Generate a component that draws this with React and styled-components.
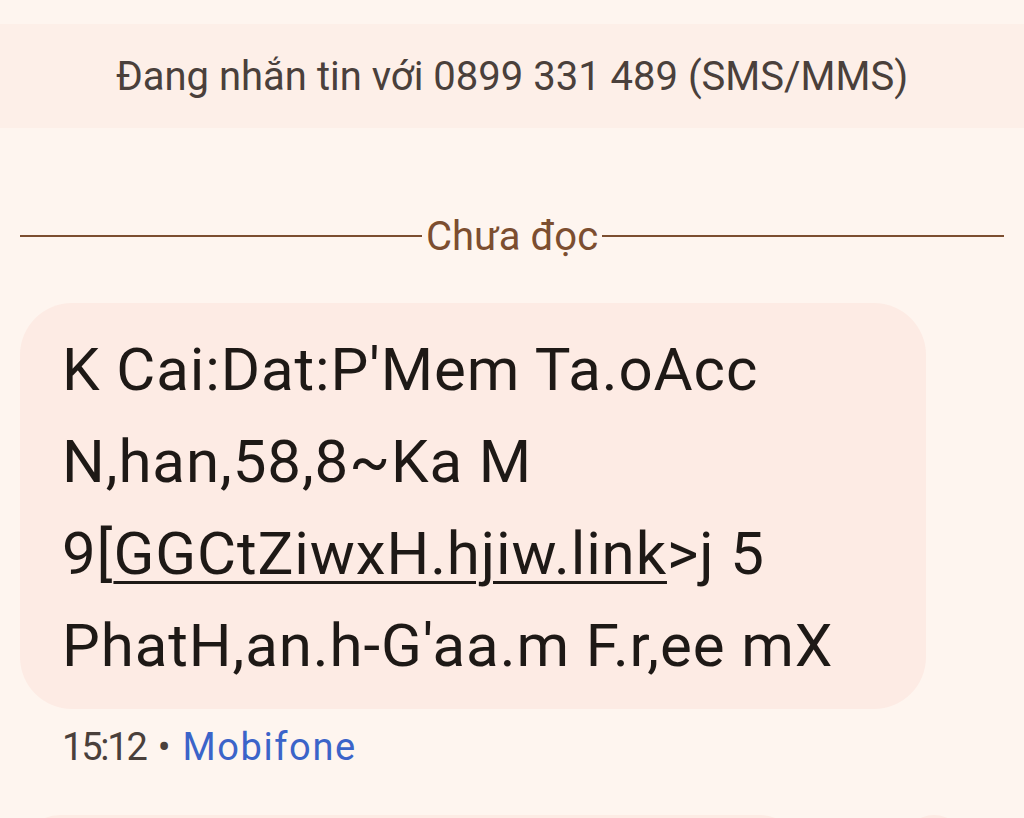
import styled, { createGlobalStyle } from "styled-components";

const Global = createGlobalStyle`
    html, body {
        margin: 0;
        padding: 0;
        background: #fef5ef;
        font-family: Roboto, "Noto Sans", sans-serif;
    }
    body {
        width: 1024px;
        height: 818px;
        overflow: hidden;
    }
`;

const Screen = styled.div`
    display: flex;
    flex-direction: column;
    padding-top: 24px;
`;

const Banner = styled.header`
    height: 104px;
    display: flex;
    align-items: center;
    justify-content: center;
    background-color: #fdefe8;
    color: #4a403b;
    font-size: 40px;
`;

const Divider = styled.div`
    display: flex;
    align-items: center;
    gap: 4px;
    margin: 88px 20px 0;
    height: 40px;
    color: #7c4e30;
    font-size: 40px;

    &::before, &::after {
        content: "";
        flex: 1;
        height: 2px;
        background-color: #7c4e30;
    }
`;

const Thread = styled.section`
    display: flex;
    flex-direction: column;
    padding: 0 20px;
    margin-top: 47px;
`;

const Bubble = styled.div`
    width: 906px;
    box-sizing: border-box;
    padding: 21px 42px 17px;
    border-radius: 52px;
    background-color: #fdebe4;
    color: #1e1916;
    font-size: 60px;
    line-height: 92px;
    letter-spacing: 0.9px;
`;

const Link = styled.span`
    text-decoration: underline;
    text-decoration-thickness: 3px;
    text-underline-offset: 7px;
`;

const Meta = styled.div`
    display: flex;
    align-items: center;
    gap: 12px;
    margin: 16px 0 0 42px;
    font-size: 38px;
    color: #4a403b;
`;

const Time = styled.span`
    letter-spacing: -2.2px;
`;

const Carrier = styled.span`
    color: #3b64c9;
    letter-spacing: 1.6px;
`;

const NextRow = styled.div`
    display: flex;
    justify-content: space-between;
    align-items: flex-start;
    margin-top: 46px;
`;

const Ghost = styled.div`
    width: ${p => p.w}px;
    height: 80px;
    border-radius: 40px;
    background-color: #fdebe4;
`;

export default function App() {
    return (
        <Screen>
            <Global />
            <Banner>Đang nhắn tin với 0899 331 489 (SMS/MMS)</Banner>
            <Divider>Chưa đọc</Divider>
            <Thread>
                <Bubble>
                    K Cai:Dat:P'Mem Ta.oAcc<br />
                    N,han,58,8~Ka M<br />
                    9[<Link>GGCtZiwxH.hjiw.link</Link>&gt;j 5<br />
                    PhatH,an.h-G'aa.m F.r,ee mX
                </Bubble>
                <Meta>
                    <Time>15:12</Time>
                    <span>•</span>
                    <Carrier>Mobifone</Carrier>
                </Meta>
                <NextRow>
                    <Ghost w={780} />
                    <Ghost w={60} style={{ marginRight: 40 }} />
                </NextRow>
            </Thread>
        </Screen>
    );
}
